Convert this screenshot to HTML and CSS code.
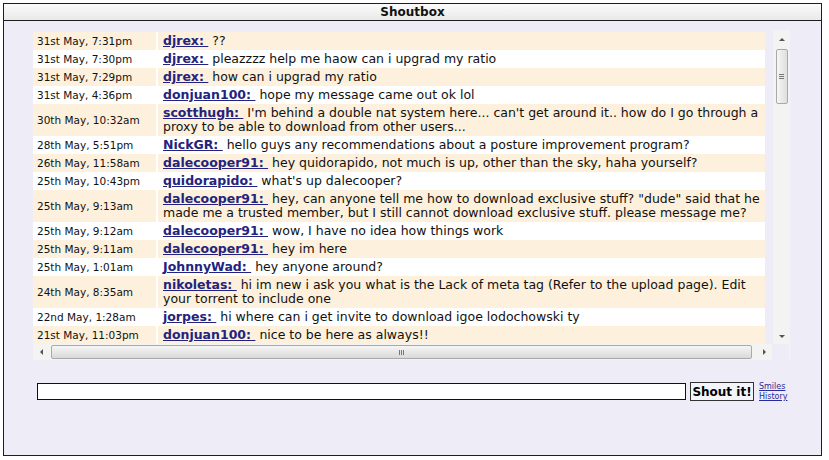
FILE: index.html
```html
<!DOCTYPE html>
<html>
<head>
<meta charset="utf-8">
<link rel="stylesheet" href="styles.css">
</head>
<body>
<div class="box">
  <div class="head">Shoutbox</div>
  <div class="main">
    <div class="frame">
      <div class="frame-top">
        <div class="viewport">
          <table class="shouts">
            <tr class="odd"><td class="date">31st May, 7:31pm</td><td class="msg"><a class="user" href="#">djrex:&nbsp;</a> ??</td></tr>
            <tr class="even"><td class="date">31st May, 7:30pm</td><td class="msg"><a class="user" href="#">djrex:&nbsp;</a> pleazzzz help me haow can i upgrad my ratio</td></tr>
            <tr class="odd"><td class="date">31st May, 7:29pm</td><td class="msg"><a class="user" href="#">djrex:&nbsp;</a> how can i upgrad my ratio</td></tr>
            <tr class="even"><td class="date">31st May, 4:36pm</td><td class="msg"><a class="user" href="#">donjuan100:&nbsp;</a> hope my message came out ok lol</td></tr>
            <tr class="odd"><td class="date">30th May, 10:32am</td><td class="msg"><a class="user" href="#">scotthugh:&nbsp;</a> I'm behind a double nat system here... can't get around it.. how do I go through a proxy to be able to download from other users...</td></tr>
            <tr class="even"><td class="date">28th May, 5:51pm</td><td class="msg"><a class="user" href="#">NickGR:&nbsp;</a> hello guys any recommendations about a posture improvement program?</td></tr>
            <tr class="odd"><td class="date">26th May, 11:58am</td><td class="msg"><a class="user" href="#">dalecooper91:&nbsp;</a> hey quidorapido, not much is up, other than the sky, haha yourself?</td></tr>
            <tr class="even"><td class="date">25th May, 10:43pm</td><td class="msg"><a class="user" href="#">quidorapido:&nbsp;</a> what's up dalecooper?</td></tr>
            <tr class="odd"><td class="date">25th May, 9:13am</td><td class="msg"><a class="user" href="#">dalecooper91:&nbsp;</a> hey, can anyone tell me how to download exclusive stuff? "dude" said that he made me a trusted member, but I still cannot download exclusive stuff. please message me?</td></tr>
            <tr class="even"><td class="date">25th May, 9:12am</td><td class="msg"><a class="user" href="#">dalecooper91:&nbsp;</a> wow, I have no idea how things work</td></tr>
            <tr class="odd"><td class="date">25th May, 9:11am</td><td class="msg"><a class="user" href="#">dalecooper91:&nbsp;</a> hey im here</td></tr>
            <tr class="even"><td class="date">25th May, 1:01am</td><td class="msg"><a class="user" href="#">JohnnyWad:&nbsp;</a> hey anyone around?</td></tr>
            <tr class="odd"><td class="date">24th May, 8:35am</td><td class="msg"><a class="user" href="#">nikoletas:&nbsp;</a> hi im new i ask you what is the Lack of meta tag (Refer to the upload page). Edit your torrent to include one</td></tr>
            <tr class="even"><td class="date">22nd May, 1:28am</td><td class="msg"><a class="user" href="#">jorpes:&nbsp;</a> hi where can i get invite to download igoe lodochowski ty</td></tr>
            <tr class="odd"><td class="date">21st May, 11:03pm</td><td class="msg"><a class="user" href="#">donjuan100:&nbsp;</a> nice to be here as always!!</td></tr>
          </table>
        </div>
        <div class="vscroll">
          <div class="arrow up"></div>
          <div class="vthumb"><span class="grip-h"></span></div>
          <div class="vtrack"></div>
          <div class="arrow down"></div>
        </div>
      </div>
      <div class="hscroll">
        <div class="harrow left"></div>
        <div class="hthumb"><span class="grip-v"></span></div>
        <div class="harrow right"></div>
        <div class="corner"></div>
      </div>
    </div>
    <div class="form">
      <input class="shout-input" type="text">
      <button class="shout-btn">Shout it!</button>
      <div class="links">
        <a href="#">Smiles</a>
        <a href="#">History</a>
      </div>
    </div>
  </div>
</div>
</body>
</html>
```
FILE: styles.css
```css
html, body {
  margin: 0;
  padding: 0;
  background: #ffffff;
}
body {
  padding: 3px;
  font-family: "DejaVu Sans", Verdana, sans-serif;
}
.box {
  width: 819px;
  height: 453px;
  box-sizing: border-box;
  border: 1px solid #1e1e1e;
  background: #eeedf7;
  display: flex;
  flex-direction: column;
}
.head {
  height: 16px;
  line-height: 16px;
  border-bottom: 1px solid #1e1e1e;
  background: linear-gradient(#fbfbfb, #e9e9e9);
  text-align: center;
  font-weight: bold;
  font-size: 12px;
  color: #111;
}
.main {
  padding: 9px 0 0 29px;
}
.frame {
  width: 757px;
  display: flex;
  flex-direction: column;
}
.frame-top {
  display: flex;
  height: 314px;
}
.viewport {
  width: 740px;
  height: 314px;
  overflow: hidden;
  padding-top: 2px;
  box-sizing: border-box;
}
.shouts {
  width: 732px;
  border-collapse: collapse;
  table-layout: fixed;
}
.shouts td {
  padding: 2px 4px;
  line-height: 14px;
  vertical-align: middle;
}
.shouts tr.odd td { background: #fdf0dc; }
.shouts tr.even td { background: #ffffff; }
.date {
  width: 115px;
  font-size: 10.5px;
  color: #111;
  white-space: nowrap;
}
.msg {
  font-size: 12.5px;
  color: #111;
  border-left: 2px solid #ffffff;
  padding-left: 5px !important;
  padding-right: 2px !important;
}
.user {
  color: #23237f;
  font-weight: bold;
  text-decoration: underline;
}
.vscroll {
  width: 17px;
  height: 314px;
  background: #f3f3f1;
  display: flex;
  flex-direction: column;
  align-items: center;
}
.arrow {
  width: 0;
  height: 0;
  border-left: 3px solid transparent;
  border-right: 3px solid transparent;
}
.arrow.up {
  border-bottom: 3px solid #555;
  margin: 8px 0 8px;
}
.arrow.down {
  border-top: 3px solid #555;
  margin: 0 0 6px;
}
.vthumb {
  width: 12px;
  height: 55px;
  box-sizing: border-box;
  border: 1px solid #a9a9a9;
  border-radius: 2px;
  background: linear-gradient(90deg, #f6f6f6, #dedede);
  display: flex;
  align-items: center;
  justify-content: center;
}
.grip-h {
  width: 5px;
  height: 5px;
  background: repeating-linear-gradient(#777 0 1px, transparent 1px 2px);
}
.vtrack { flex: 1; }
.hscroll {
  height: 16px;
  display: flex;
  align-items: center;
  background: #f3f3f1;
}
.harrow {
  width: 0;
  height: 0;
  border-top: 3px solid transparent;
  border-bottom: 3px solid transparent;
}
.harrow.left {
  border-right: 3px solid #555;
  margin: 0 8px 0 7px;
}
.harrow.right {
  border-left: 3px solid #555;
  margin: 0 6px 0 11px;
}
.hthumb {
  width: 701px;
  height: 14px;
  box-sizing: border-box;
  border: 1px solid #a9a9a9;
  border-radius: 2px;
  background: linear-gradient(#f6f6f6, #d9d9d9);
  display: flex;
  align-items: center;
  justify-content: center;
}
.grip-v {
  width: 5px;
  height: 5px;
  background: repeating-linear-gradient(90deg, #777 0 1px, transparent 1px 2px);
}
.corner {
  width: 17px;
  align-self: stretch;
  background: #eeedf7;
}
.form {
  display: flex;
  align-items: flex-start;
  margin-top: 22px;
  padding-left: 4px;
}
.shout-input {
  width: 649px;
  height: 17px;
  box-sizing: border-box;
  border: 1px solid #111;
  background: #fff;
  margin: 1px 0 0 0;
  padding: 0;
}
.shout-btn {
  width: 64px;
  height: 19px;
  margin-left: 4px;
  box-sizing: border-box;
  border: 1px solid #333;
  background: #f3f5f8;
  font-family: "DejaVu Sans", Verdana, sans-serif;
  font-weight: bold;
  font-size: 12px;
  padding: 0;
  color: #000;
}
.links {
  display: flex;
  flex-direction: column;
  margin-left: 5px;
  margin-top: 0;
}
.links a {
  font-size: 8px;
  line-height: 10px;
  color: #2a2a9a;
  text-decoration: underline;
}
```
